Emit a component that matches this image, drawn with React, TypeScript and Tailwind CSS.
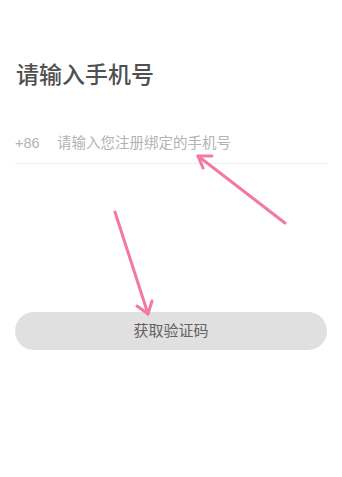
import React from "react";

const font = { fontFamily: '"Liberation Sans", "Noto Sans CJK SC", sans-serif' };

export default function App() {
  return (
    <div className="relative w-[342px] h-[477px] bg-white overflow-hidden" style={font}>
      <div className="px-[15px] pt-[60px]">
        {/* title */}
        <h1 className="text-[23px] leading-[30px] font-medium text-[#505050] pl-[1px]">请输入手机号</h1>

        {/* phone input */}
        <div className="mt-[35px] h-[39px] flex items-center border-b border-[#efefef]">
          <span className="text-[14.5px] text-[#b3b3b3] w-[42px]">+86</span>
          <span className="text-[14.5px] text-[#b3b3b3]">请输入您注册绑定的手机号</span>
        </div>

        {/* button */}
        <button className="mt-[148px] w-full h-[38px] rounded-full bg-[#e0e0e0] text-[15px] text-[#636363] flex items-center justify-center">
          获取验证码
        </button>
      </div>

      {/* annotation arrows */}
      <svg className="absolute inset-0 pointer-events-none" width="342" height="477" viewBox="0 0 342 477">
        <g stroke="#f27aa0" strokeWidth="3" strokeLinecap="round" strokeLinejoin="round" fill="none">
          <path d="M285 223 L198 156" />
          <path d="M212 156 L198 156 L203 168" />
          <path d="M115 212 L148 314" />
          <path d="M137 306 L148 314 L152 301" />
        </g>
      </svg>
    </div>
  );
}
